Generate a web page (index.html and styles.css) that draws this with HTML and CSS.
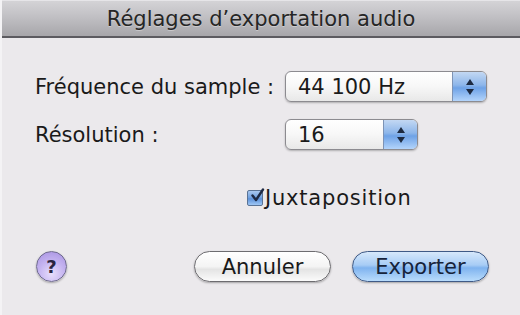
FILE: index.html
```html
<!DOCTYPE html>
<html lang="fr">
<head>
<meta charset="utf-8">
<title>Réglages d'exportation audio</title>
<link rel="stylesheet" href="styles.css">
</head>
<body>
<div class="window">
  <div class="titlebar"><span class="title">Réglages d’exportation audio</span></div>
  <div class="content">
    <div class="form">
      <div class="label">Fréquence du sample :</div>
      <div class="popup popup-wide">
        <span class="popup-value">44 100 Hz</span>
        <span class="popup-arrows"><span class="tri up"></span><span class="tri down"></span></span>
      </div>
      <div class="label">Résolution :</div>
      <div class="popup popup-narrow">
        <span class="popup-value">16</span>
        <span class="popup-arrows"><span class="tri up"></span><span class="tri down"></span></span>
      </div>
    </div>
    <div class="check-row">
      <span class="checkbox">
        <svg viewBox="0 0 16 16" width="16" height="16"><path d="M3.5 7.5 L7 12 L14 1.5" fill="none" stroke="#1e2a44" stroke-width="2.4" stroke-linecap="round" stroke-linejoin="round"/></svg>
      </span>
      <span class="check-label">Juxtaposition</span>
    </div>
    <div class="buttons">
      <span class="help">?</span>
      <div class="spacer"></div>
      <span class="btn">Annuler</span>
      <span class="btn btn-default">Exporter</span>
    </div>
  </div>
</div>
</body>
</html>
```
FILE: styles.css
```css
html, body {
  margin: 0;
  padding: 0;
  width: 520px;
  height: 315px;
  overflow: hidden;
  background: #ebe9ec;
  font-family: "DejaVu Sans", "Liberation Sans", sans-serif;
  color: #1c1c1c;
}
.window {
  width: 520px;
  height: 315px;
  display: flex;
  flex-direction: column;
  background: #ebe9ec;
  border-left: 2px solid #f4f3f5;
  box-sizing: border-box;
}
.titlebar {
  flex: none;
  display: flex;
  align-items: center;
  justify-content: center;
  background: linear-gradient(#d4d3d6 0%, #c3c2c6 40%, #a7a6aa 100%);
  border-top: 1px solid #e6e5e8;
  border-bottom: 2px solid #5c5b60;
  box-sizing: border-box;
  height: 38px;
}
.title {
  font-size: 21px;
  color: #262626;
  text-shadow: 0 1px 0 rgba(255,255,255,0.35);
}
.content {
  flex: 1;
  display: flex;
  flex-direction: column;
  padding: 33px 0 0 33px;
}
.form {
  display: grid;
  grid-template-columns: 250px auto;
  row-gap: 17px;
  align-items: center;
}
.label {
  font-size: 21px;
  color: #1a1a1a;
}
.popup {
  height: 31px;
  box-sizing: border-box;
  display: flex;
  border: 1px solid #8c8b90;
  border-radius: 6px;
  background: linear-gradient(#ffffff 0%, #f7f7f7 50%, #e8e8e8 100%);
  box-shadow: 0 1px 2px rgba(0,0,0,0.25);
  overflow: hidden;
}
.popup-wide { width: 202px; }
.popup-narrow { width: 133px; }
.popup-value {
  flex: 1;
  display: flex;
  align-items: center;
  padding-left: 12px;
  font-size: 21px;
  color: #1a1a1a;
}
.popup-arrows {
  width: 33px;
  flex: none;
  display: flex;
  flex-direction: column;
  align-items: center;
  justify-content: center;
  gap: 4px;
  border-left: 1px solid #7d93b5;
  background: linear-gradient(#c3d8f3 0%, #8db6ea 45%, #6ea2e6 55%, #b3d4fb 100%);
}
.tri {
  width: 0;
  height: 0;
  border-left: 4px solid transparent;
  border-right: 4px solid transparent;
}
.tri.up { border-bottom: 6px solid #1d2a40; }
.tri.down { border-top: 6px solid #1d2a40; }
.check-row {
  display: flex;
  align-items: center;
  margin: 36px 0 0 212px;
  gap: 2px;
}
.checkbox {
  width: 16px;
  height: 16px;
  box-sizing: border-box;
  border: 1px solid #5a7395;
  border-radius: 2px;
  background: linear-gradient(#a9c8ef 0%, #6d9fe0 50%, #5b90d8 55%, #9fc7f5 100%);
  position: relative;
  display: inline-block;
}
.checkbox svg {
  position: absolute;
  left: 1px;
  top: -3px;
  width: 16px;
  height: 16px;
}
.check-label {
  font-size: 21px;
  letter-spacing: 0.8px;
  color: #1a1a1a;
}
.buttons {
  display: flex;
  align-items: center;
  margin-top: 41px;
  padding-right: 31px;
}
.help {
  width: 31px;
  height: 31px;
  margin-left: 1px;
  border-radius: 50%;
  box-sizing: border-box;
  border: 1px solid #6e6a8e;
  background: radial-gradient(circle at 50% 75%, #e7defc 0%, #c4b3f0 50%, #a58fe0 100%);
  box-shadow: 0 1px 2px rgba(0,0,0,0.3);
  display: flex;
  align-items: center;
  justify-content: center;
  font-weight: bold;
  font-size: 18px;
  color: #2a2440;
}
.spacer { flex: 1; }
.btn {
  width: 137px;
  height: 31px;
  box-sizing: border-box;
  border-radius: 16px;
  border: 1px solid #6d6c70;
  background: linear-gradient(#ffffff 0%, #f4f4f4 50%, #e4e4e4 60%, #fbfbfb 100%);
  box-shadow: 0 1px 2px rgba(0,0,0,0.3);
  display: flex;
  align-items: center;
  justify-content: center;
  font-size: 21px;
  color: #1a1a1a;
  margin-left: 21px;
}
.btn-default {
  border-color: #3f5a86;
  background: linear-gradient(#d6e8fb 0%, #a7ccf5 45%, #7fb3ef 55%, #b9dcfc 100%);
  color: #16233a;
}
```
